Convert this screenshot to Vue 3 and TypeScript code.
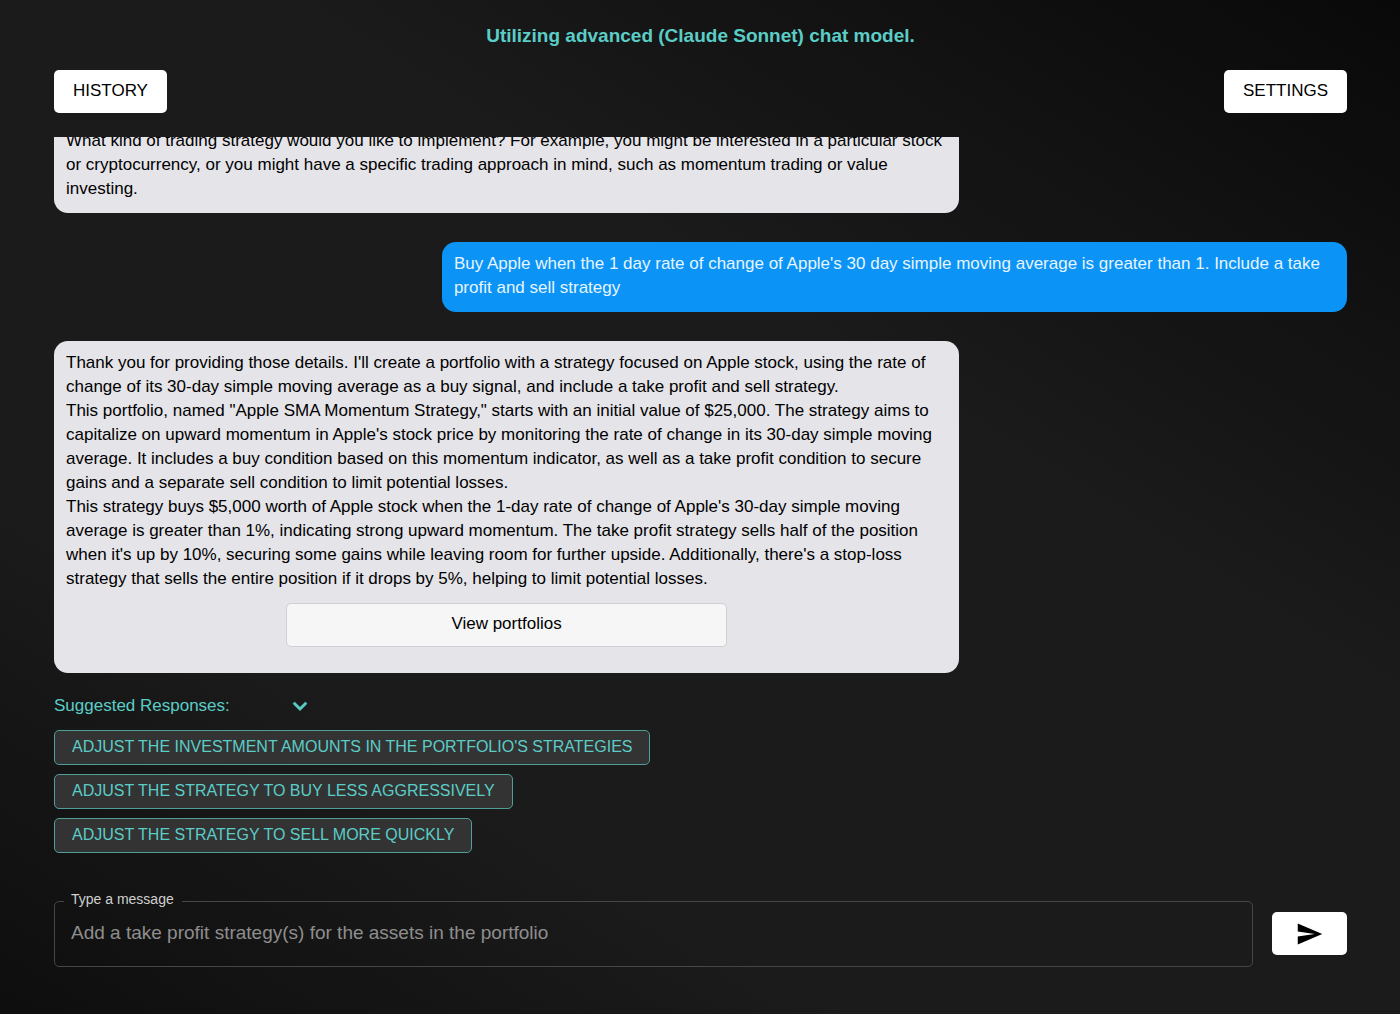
<script setup lang="ts">
import { nextTick, onMounted, ref } from 'vue'

interface Message {
  id: number
  author: 'assistant' | 'user'
  paragraphs: string[]
  action?: string
}

const messages: Message[] = [
  {
    id: 1,
    author: 'assistant',
    paragraphs: [
      'What kind of trading strategy would you like to implement? For example, you might be interested in a particular stock or cryptocurrency, or you might have a specific trading approach in mind, such as momentum trading or value investing.',
    ],
  },
  {
    id: 2,
    author: 'user',
    paragraphs: [
      "Buy Apple when the 1 day rate of change of Apple's 30 day simple moving average is greater than 1. Include a take profit and sell strategy",
    ],
  },
  {
    id: 3,
    author: 'assistant',
    paragraphs: [
      "Thank you for providing those details. I'll create a portfolio with a strategy focused on Apple stock, using the rate of change of its 30-day simple moving average as a buy signal, and include a take profit and sell strategy.",
      'This portfolio, named "Apple SMA Momentum Strategy," starts with an initial value of $25,000. The strategy aims to capitalize on upward momentum in Apple\'s stock price by monitoring the rate of change in its 30-day simple moving average. It includes a buy condition based on this momentum indicator, as well as a take profit condition to secure gains and a separate sell condition to limit potential losses.',
      "This strategy buys $5,000 worth of Apple stock when the 1-day rate of change of Apple's 30-day simple moving average is greater than 1%, indicating strong upward momentum. The take profit strategy sells half of the position when it's up by 10%, securing some gains while leaving room for further upside. Additionally, there's a stop-loss strategy that sells the entire position if it drops by 5%, helping to limit potential losses.",
    ],
    action: 'View portfolios',
  },
]

const suggestions: string[] = [
  "Adjust the investment amounts in the portfolio's strategies",
  'Adjust the strategy to buy less aggressively',
  'Adjust the strategy to sell more quickly',
]

const open = ref(true)
const draft = ref('')
const log = ref<HTMLElement | null>(null)

// Keep the newest message in view.
onMounted(async () => {
  await nextTick()
  if (log.value) log.value.scrollTop = log.value.scrollHeight
})
</script>

<template>
  <div class="page">
    <h1 class="title">Utilizing advanced (Claude Sonnet) chat model.</h1>

    <nav class="toolbar">
      <button type="button" class="solid">HISTORY</button>
      <button type="button" class="solid">SETTINGS</button>
    </nav>

    <main ref="log" class="log">
      <article v-for="m in messages" :key="m.id" class="bubble" :class="m.author">
        <p v-for="(p, i) in m.paragraphs" :key="i">{{ p }}</p>
        <button v-if="m.action" type="button" class="action">{{ m.action }}</button>
      </article>
    </main>

    <section class="suggestions">
      <div class="suggest-head">
        <span>Suggested Responses:</span>
        <button type="button" class="toggle" aria-label="Toggle suggestions" :aria-expanded="open" @click="open = !open">
          <svg viewBox="0 0 24 24" width="28" height="28" aria-hidden="true">
            <path d="M16.59 8.59 12 13.17 7.41 8.59 6 10l6 6 6-6z" fill="currentColor" stroke="currentColor" stroke-width="0.5" />
          </svg>
        </button>
      </div>
      <template v-if="open">
        <button v-for="s in suggestions" :key="s" type="button" class="chip" @click="draft = s">{{ s }}</button>
      </template>
    </section>

    <form class="composer" @submit.prevent>
      <fieldset class="field">
        <legend><label for="message">Type a message</label></legend>
        <textarea id="message" v-model="draft" rows="1" placeholder="Add a take profit strategy(s) for the assets in the portfolio"></textarea>
      </fieldset>
      <button type="submit" class="send" aria-label="Send">
        <svg viewBox="0 0 24 24" width="28" height="28" aria-hidden="true">
          <path d="M1.5 21 22.5 12 1.5 3v6.8L16 12 1.5 14.2z" fill="currentColor" />
        </svg>
      </button>
    </form>
  </div>
</template>

<style>
body {
  margin: 0;
  background: #1b1b1b;
}
</style>

<style scoped>
.page {
  box-sizing: border-box;
  height: 100vh;
  display: flex;
  flex-direction: column;
  padding: 24px 53px 47px 54px;
  background: linear-gradient(32deg, #0e0e0e 0%, #1b1b1b 28%, #1b1b1b 62%, #090909 100%);
  font-family: "Liberation Sans", Arial, sans-serif;
  font-size: 17px;
  line-height: 24px;
  color: #000;
}

button,
textarea {
  font: inherit;
}

button {
  cursor: pointer;
}

.title {
  margin: 0 0 22px;
  font-size: 19px;
  line-height: 24px;
  font-weight: 700;
  text-align: center;
  color: #5bcdc7;
}

.toolbar {
  display: flex;
  justify-content: space-between;
  margin-bottom: 24px;
}

.solid {
  height: 43px;
  padding: 0 19px 2px;
  border: 0;
  border-radius: 5px;
  background: #fff;
  color: #000;
}

.log {
  flex: 1;
  min-height: 0;
  display: flex;
  flex-direction: column;
  gap: 29px;
  overflow: auto;
  scrollbar-width: none;
}

.bubble {
  box-sizing: border-box;
  flex: none;
  width: 70%;
  padding: 10px 12px 12px;
  border-radius: 14px;
  background: #e5e4e9;
}

.bubble.user {
  align-self: flex-end;
  background: #0b93f6;
  color: #e6f5ff;
}

.bubble p {
  margin: 0;
}

.action {
  display: block;
  width: 50%;
  height: 44px;
  margin: 12px auto 14px;
  padding: 0 0 2px;
  border: 1px solid #d0d0d4;
  border-radius: 5px;
  background: #f6f6f6;
  color: #000;
}

.suggestions {
  display: flex;
  flex-direction: column;
  align-items: flex-start;
  gap: 9px;
  margin-top: 18px;
  color: #5bcdc7;
}

.suggest-head {
  display: flex;
  align-items: center;
  gap: 56px;
  height: 30px;
}

.toggle {
  display: flex;
  padding: 0;
  border: 0;
  background: none;
  color: inherit;
}

.chip {
  height: 35px;
  padding: 0 17px 2px;
  border: 1px solid #4f9e98;
  border-radius: 5px;
  background: #333;
  color: inherit;
  font-size: 16px;
  text-transform: uppercase;
}

.composer {
  display: flex;
  align-items: flex-end;
  gap: 19px;
  margin-top: 36px;
}

.field {
  flex: 1;
  min-width: 0;
  box-sizing: border-box;
  height: 78px;
  margin: 0;
  padding: 0 16px;
  border: 1px solid #464646;
  border-radius: 5px;
}

.field legend {
  margin-left: -7px;
  padding: 0 8px 4px 7px;
  font-size: 14px;
  line-height: 20px;
  color: #d0d0d0;
}

.field textarea {
  display: block;
  width: 100%;
  height: 28px;
  margin-top: 6px;
  padding: 0;
  border: 0;
  outline: 0;
  resize: none;
  overflow: hidden;
  background: none;
  color: #fff;
  font-size: 19px;
  line-height: 28px;
}

.field textarea::placeholder {
  color: #8e8e8e;
  opacity: 1;
}

.send {
  display: flex;
  align-items: center;
  justify-content: center;
  width: 75px;
  height: 43px;
  margin-bottom: 12px;
  padding: 0;
  border: 0;
  border-radius: 5px;
  background: #fff;
  color: #000;
}
</style>
